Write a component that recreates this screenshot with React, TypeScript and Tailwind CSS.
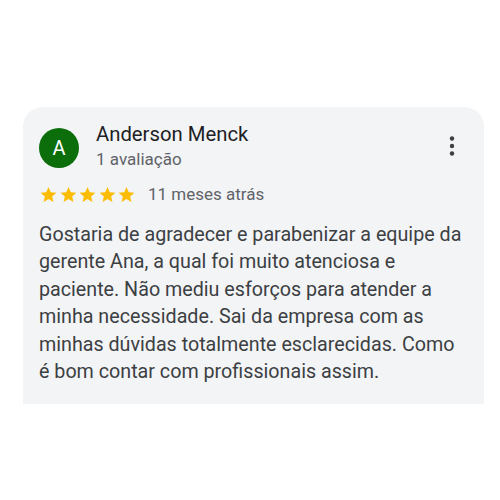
import React from 'react';

const Star = () => (
  <svg viewBox="0 0 24 24" className="w-[19px] h-[19px]" fill="#fbbc04">
    <path d="M12 2.5l2.9 6.6 7.1.6-5.4 4.7 1.6 7-6.2-3.7-6.2 3.7 1.6-7L2 9.7l7.1-.6z" />
  </svg>
);

export default function App() {
  return (
    <div className="w-[500px] h-[500px] bg-white pt-[107px] pl-[23px]" style={{ fontFamily: 'Roboto, "Noto Sans", sans-serif' }}>
      <div className="w-[461px] h-[297px] bg-[#f3f4f6] rounded-t-[20px] pl-4 pr-4 pt-[21px]">
        {/* header */}
        <div className="flex items-start">
          <div className="w-10 h-10 rounded-full bg-[#0b6e0b] flex items-center justify-center text-white text-[20px] shrink-0">
            A
          </div>
          <div className="ml-[17px] flex-1 -mt-[7px]">
            <div className="text-[20.3px] leading-[26px] text-[#202124]">Anderson Menck</div>
            <div className="text-[17px] leading-[24px] text-[#5f6368]">1 avaliação</div>
          </div>
          <svg viewBox="0 0 24 24" className="w-6 h-6 mt-[6px] mr-[4px]" fill="#3c4043">
            <circle cx="12" cy="4.5" r="2.2" />
            <circle cx="12" cy="12" r="2.2" />
            <circle cx="12" cy="19.5" r="2.2" />
          </svg>
        </div>

        {/* rating */}
        <div className="flex items-center mt-[11px]">
          <div className="flex gap-[0.5px]">
            <Star />
            <Star />
            <Star />
            <Star />
            <Star />
          </div>
          <span className="ml-[12px] text-[17px] text-[#5f6368]">11 meses atrás</span>
        </div>

        {/* body */}
        <p className="mt-[13px] w-[426px] text-[19.7px] leading-[27.5px] text-[#3c4043]">
          Gostaria de agradecer e parabenizar a equipe da gerente Ana, a qual foi muito atenciosa e paciente. Não mediu esforços para atender a minha necessidade. Sai da empresa com as minhas dúvidas totalmente esclarecidas. Como é bom contar com profissionais assim.
        </p>
      </div>
    </div>
  );
}
